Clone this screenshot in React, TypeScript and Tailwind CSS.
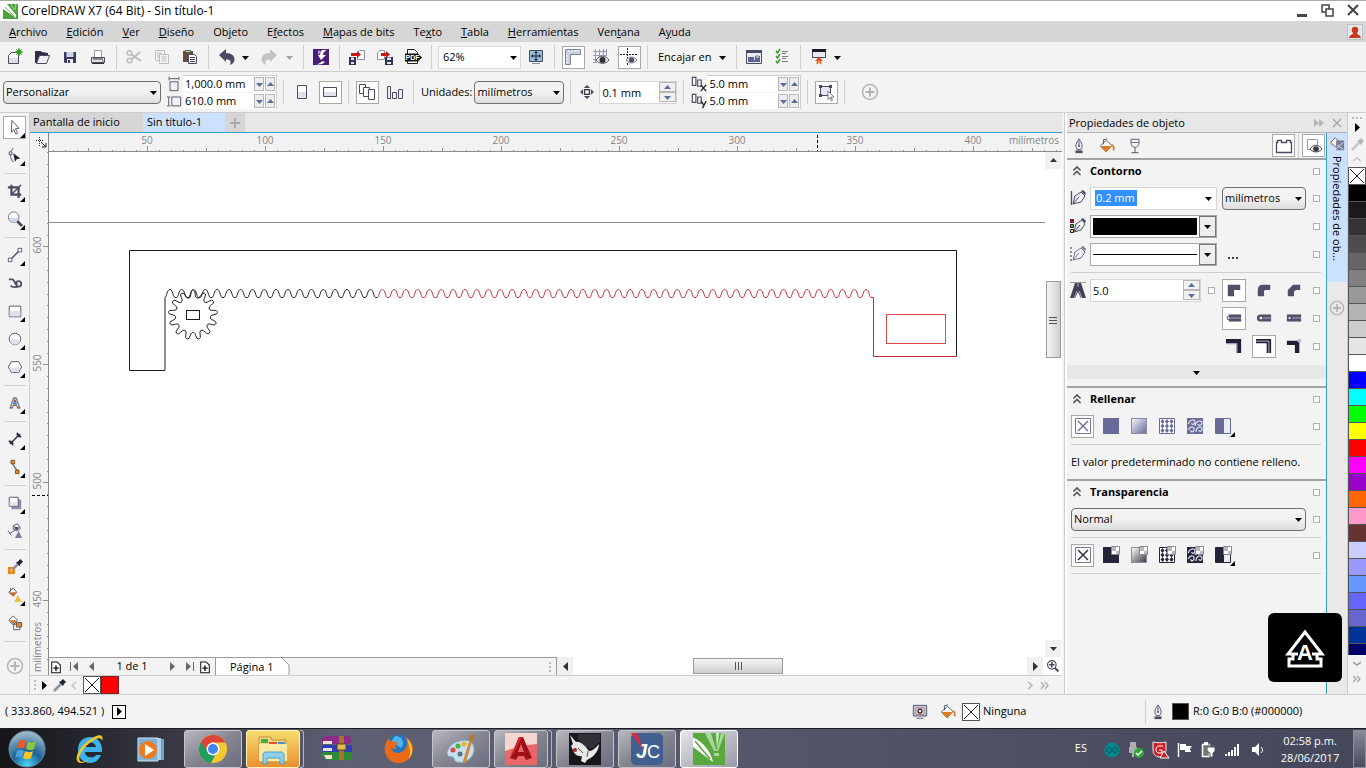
import React from 'react';

const INK = '#4a4a63';
const DIM = '#bdbdbd';

// Small drawings, all on an 18 x 18 grid
const glyphs: Record<string, React.ReactNode> = {
  newDoc: (
    <>
      <path d="M3.500 7.500l3-3h7v11h-10z" fill="#fff" stroke={INK} />
      <path d="M4 10h9v5H4z" fill="#dcdce8" />
      <circle cx="14" cy="4" r="2.600" fill="#2fa01c" />
      <path d="M14 0v8M10 4h8M11.300 1.300l5.400 5.400M16.700 1.300l-5.400 5.400" stroke="#2fa01c" />
    </>
  ),
  open: (
    <>
      <path d="M3 3h5l1 2h6v4H3z" fill="#3b3b55" />
      <path d="M2 3v12h2l2-7h9V5" fill="#2c2c45" />
      <path d="M6.500 7.500h10l-3 8h-10z" fill="#eceef6" stroke={INK} />
    </>
  ),
  save: (
    <>
      <path d="M3 4h12v11H4l-1-1z" fill="#3a3a66" />
      <path d="M5.500 4h7v5h-7z" fill="#cfd3e8" />
      <path d="M6 11h6v4H6z" fill="#e9e9f2" />
      <path d="M7 12h2v3H7z" fill="#3a3a66" />
    </>
  ),
  print: (
    <>
      <path d="M5.500 2.500h7v8h-7z" fill="#fff" stroke="#9a9aaa" />
      <path d="M2.500 9.500h13v5h-13z" fill="#e5e5e5" stroke={INK} />
      <path d="M4 11h10" stroke="#2c2c2c" />
      <path d="M13 13h2" stroke="#3aa02c" />
      <path d="M3 15.500h12" stroke="#333" />
    </>
  ),
  cut: (
    <g stroke={DIM} fill="none" strokeWidth="1.500">
      <circle cx="4.500" cy="5" r="2.300" />
      <circle cx="4.500" cy="12.500" r="2.300" />
      <path d="M6.500 6.500L16 13M6.500 11.500L15 4" strokeWidth="2" />
    </g>
  ),
  copy: (
    <g stroke={DIM} fill="#f3f3f3">
      <path d="M2.500 2.500h9v10h-9z" />
      <path d="M6.500 6.500h9v9h-9z" />
      <path d="M8.500 9h5M8.500 11h5M8.500 13h5M4 5h5M4 7h2M4 9h2" />
    </g>
  ),
  paste: (
    <>
      <path d="M2 3h10v11H2z" fill="#6b4a36" />
      <path d="M4.500 2.500h5v2h-5z" fill="#cfe3c0" stroke="#4a5a4a" />
      <path d="M7.500 6.500h6l2 2v7h-8z" fill="#f4f4fa" stroke={INK} />
      <path d="M9 9.500h5M9 11.500h5M9 13.500h5" stroke={INK} />
    </>
  ),
  undo: <path d="M1 7l7-6v4c6 0 8.500 3 8.500 6.500 0 3-2 4.800-5 5.500 2-2 2-5.500-3.500-5.700V14z" fill={INK} />,
  redo: <path d="M17 7l-7-6v4c-6 0-8.500 3-8.500 6.500 0 3 2 4.800 5 5.500-2-2-2-5.500 3.500-5.700V14z" fill="#c4c4c4" />,
  connect: (
    <>
      <path d="M1 1h16v16H1z" fill="#4b1e78" />
      <path d="M11 2h4c-3 1-4 3-4 5h3l-5 5-3-5h2c0-3 1-5 3-5z" fill="#fff" />
      <path d="M4 16c4 0 5-2 6-3l3 1c-2 2-5 3-9 2z" fill="#fff" />
      <path d="M6 2l3 2-3 3z" fill="#b99ad6" />
    </>
  ),
  importFile: (
    <>
      <path d="M9.500 4.500l2-2h5v9h-7z" fill="#fff" stroke="#8c8ca8" />
      <path d="M3 5h6V3l4 3.500L9 10V8H3z" fill="#c81818" />
      <path d="M1 9h7v8H1z" fill="#33334e" />
      <path d="M3 9.500h3v2.500H3zM3 14h3v2H3z" fill="#dfe2f0" />
    </>
  ),
  exportFile: (
    <>
      <path d="M1.500 4.500l2-2h5v9h-7z" fill="#fff" stroke="#8c8ca8" />
      <path d="M5 5h5V3l4 3.500L10 10V8H5z" fill="#c81818" />
      <path d="M9 9h8v8H9z" fill="#33334e" />
      <path d="M11 9.500h4v2.500h-4zM11 14h4v2h-4z" fill="#dfe2f0" />
    </>
  ),
  pdf: (
    <>
      <path d="M3.500 1.500h7l3 3v11h-10z" fill="#fff" stroke="#222" />
      <path d="M1 5.500h13l4 4-4 4H1z" fill="#111" />
      <text x="1.500" y="12" fontSize="7" fontWeight="700" fill="#fff" fontFamily="Liberation Sans, sans-serif">PDF</text>
    </>
  ),
  fullScreen: (
    <>
      <path d="M2.500 2.500h13v11h-13z" fill="#8fc0d8" stroke={INK} />
      <path d="M9 4v8M5 8h8" stroke="#1d1d33" />
      <path d="M9 3l2 2H7zM9 13l2-2H7zM4 8l2-2v4zM14 8l-2-2v4z" fill="#1d1d33" />
      <path d="M5 15.500h8" stroke="#8a8aa0" />
    </>
  ),
  rulers: (
    <>
      <path d="M1.500 1.500h15v5h-10v10h-5z" fill="#c9cddd" stroke="#7c819c" />
      <path d="M5 2v2M8 2v2M11 2v2M14 2v2M2 8h2M2 11h2M2 14h2" stroke="#fff" />
    </>
  ),
  grid: (
    <>
      <path d="M1 3.500h14M1 7.500h14M1 11.500h6M3.500 1v13M7.500 1v8M11.500 1v6M1 14.500h4M14.500 1v6" stroke="#9a9ab4" />
      <path d="M4 12c3-5 10-5 13 0-3 4.500-10 4.500-13 0z" fill="#e9e9ee" stroke="#555" />
      <circle cx="10.500" cy="12" r="3" fill="#2e2e38" />
    </>
  ),
  guides: (
    <>
      <path d="M7.500 0v18M0 6.500h18" stroke="#222" strokeDasharray="2 1" />
      <path d="M6 12c3-4 8-4 11 0-3 4-8 4-11 0z" fill="#dcdce0" stroke="#888" />
      <circle cx="11.500" cy="12" r="2.500" fill="#4c4c60" />
    </>
  ),
  welcome: (
    <>
      <path d="M1.500 2.500h15v13h-15z" fill="#e7e9f3" stroke={INK} />
      <path d="M1 2h16v3H1z" fill={INK} />
      <path d="M3 9h6v3h1V8h5v6H3z" fill="#5d628c" />
      <path d="M11 7h3v3h-3z" fill="#aab0d0" />
    </>
  ),
  options: (
    <>
      <path d="M9 3.500h6M9 8.500h6M9 13.500h6M9 5.500h4M9 10.500h4" stroke="#77778c" />
      <path d="M3 3l1.500 2L7 1M3 8l1.500 2L7 6M3 13l1.500 2L7 11" stroke="#3e9a2d" fill="none" strokeWidth="1.500" />
    </>
  ),
  launcher: (
    <>
      <path d="M2.500 1.500h13v8h-13z" fill="#e8e8f0" stroke={INK} />
      <path d="M2 1h14v3H2z" fill="#1b1b2b" />
      <path d="M9 9l4 4-2-.5.500 4-2.500-2-2.500 2 .5-4L5 13z" fill="#e33a1c" />
      <path d="M9 12l1.500 2L9 16l-1.500-2z" fill="#f7b733" />
    </>
  ),
  pageW: (
    <>
      <path d="M4.500 6.500h9v10h-9z" fill="#f1f1f6" stroke={INK} />
      <path d="M3.500 1v4M14.500 1v4M4 3h10" stroke={INK} />
    </>
  ),
  pageH: (
    <>
      <path d="M6.500 4.500h10v10h-10z" fill="#f1f1f6" stroke={INK} />
      <path d="M1 4.500h4M1 14.500h4M3 5v9" stroke={INK} />
    </>
  ),
  portrait: <><path d="M4.500 2.500h9v13h-9z" fill="#fff" stroke={INK} /><path d="M5 9h8v6H5z" fill="#dfe0ea" /></>,
  landscape: <><path d="M2.500 4.500h13v9h-13z" fill="#fff" stroke={INK} /><path d="M3 9h12v4H3z" fill="#dfe0ea" /></>,
  allPages: (
    <g fill="#fff" stroke={INK}>
      <path d="M1.500 1.500h6v9h-6z" /><path d="M5.500 4.500h6v9h-6z" /><path d="M10.500 6.500h6v10h-6z" />
    </g>
  ),
  curPage: (
    <g fill="#eef" stroke={INK}>
      <path d="M1.500 3.500h3v12h-3zM6.500 9.500h4v6h-4zM12.500 6.500h4v9h-4z" />
    </g>
  ),
  nudge: (
    <>
      <path d="M6 6h6v6H6z" fill="#fff" stroke="#2c2c3c" strokeWidth="1.500" />
      <path d="M9 0l4 4H5zM9 18l4-4H5zM0 9l4-4v8zM18 9l-4-4v8z" fill={INK} />
    </>
  ),
  dupX: (
    <>
      <g fill="#fff" stroke={INK} strokeWidth="1.300"><path d="M1.500 1.500h4v9h-4z" /><path d="M7.500 4.500h4v7h-4z" /></g>
      <path d="M11 10l6 7M17 10l-6 7" stroke="#222" strokeWidth="1.500" />
    </>
  ),
  dupY: (
    <>
      <g fill="#fff" stroke={INK} strokeWidth="1.300"><path d="M1.500 1.500h4v9h-4z" /><path d="M7.500 4.500h4v7h-4z" /></g>
      <path d="M11 9l3 4M17 9l-4 8" stroke="#222" strokeWidth="1.500" />
    </>
  ),
  treatAll: (
    <>
      <path d="M3.500 3.500h10v9h-10z" fill="#e6e7f0" stroke={INK} />
      <path d="M2 2h3v3H2zM12 2h3v3h-3zM2 11h3v3H2z" fill={INK} />
      <path d="M11 8l6 6h-3l1.500 3-1.500.5-1-3-2 2z" fill="#fff" stroke="#7d7d95" />
    </>
  ),
  plusRing: <g stroke="#b4b4b4" fill="none"><circle cx="9" cy="9" r="7.500" strokeWidth="1.500" /><path d="M9 4.500v9M4.500 9h9" strokeWidth="2" /></g>,
  pick: <path d="M5.500 1.500l8 9-4 .5 2.500 5-2 1-2.500-5-2.500 3z" fill="#fff" stroke={INK} />,
  shape: (
    <>
      <path d="M7 1C3 6 3 12 7 17" fill="none" stroke="#8c8ca0" strokeWidth="1.500" />
      <path d="M2.500 5.500h3v3h-3z" fill="#fff" stroke={INK} />
      <path d="M7 7l8 6-4 .5-2 3z" fill="#1e1e2d" />
    </>
  ),
  crop: (
    <g fill="none" stroke={INK} strokeWidth="2.500">
      <path d="M5 2v11h11M1 5h12v12" /><path d="M5 13L16 2" strokeWidth="1.500" />
    </g>
  ),
  zoomTool: (
    <>
      <path d="M11 11l6 6" stroke="#4b4b58" strokeWidth="3" />
      <circle cx="7.500" cy="7" r="6" fill="#fff" stroke="#6a6a86" />
      <path d="M2.500 8h10a5 5 0 0 1-10 0z" fill="#cfd6e8" />
    </>
  ),
  freehand: (
    <>
      <path d="M4 14L14 4" stroke={INK} strokeWidth="1.500" />
      <path d="M1.500 12.500h4v4h-4zM12.500 1.500h4v4h-4z" fill="#fff" stroke={INK} />
    </>
  ),
  artistic: <path d="M2 5h4c3 0 3 8 7 8 4 0 4-6 0-6-3 0-4 3-1 3M12 13c-3 1-6 1-8-1" fill="none" stroke="#4f4f64" strokeWidth="2" />,
  rect: <><path d="M2.500 3.500h13v12h-13z" fill="#fff" stroke={INK} /><path d="M3 9h12v6H3z" fill="#dfe0ea" /></>,
  ellipse: <><circle cx="9" cy="9" r="6.500" fill="#fff" stroke={INK} /><path d="M3 9.500h12a6 6 0 0 1-12 0z" fill="#dfe0ea" /></>,
  polygon: <><path d="M5 3h8l3.500 6-3.500 6H5L1.500 9z" fill="#fff" stroke={INK} /><path d="M2.500 9.500h13l-3 5h-7z" fill="#dfe0ea" /></>,
  textTool: <text x="3" y="15" fontSize="16" fontWeight="700" fill="#fff" stroke={INK} strokeWidth="1" fontFamily="Liberation Sans, sans-serif">A</text>,
  dimension: (
    <>
      <path d="M4 14L14 4" stroke="#2c2c3c" strokeWidth="1.500" />
      <path d="M2 11l5 5M11 2l5 5" stroke="#2c2c3c" strokeWidth="1.500" />
      <path d="M3 15l1-5 4 4zM15 3l-5 1 4 4z" fill="#2c2c3c" />
    </>
  ),
  connector: (
    <>
      <path d="M6 5l6 9" stroke={INK} strokeWidth="1.200" />
      <path d="M4.500 1.500h4v4h-4zM9.500 12.500h4v4h-4z" fill="#e8871e" stroke="#7a4a1a" />
    </>
  ),
  shadow: <><path d="M5 5h11v11H5z" fill="#8d90ad" /><path d="M2.500 2.500h10v10h-10z" fill="#fff" stroke={INK} /><path d="M3 8h9v4H3z" fill="#e5e5ee" /></>,
  transp: (
    <>
      <path d="M7 3l5-2 3 5-3 3-5-2z" fill="#f0f2fa" stroke={INK} />
      <path d="M8 4l6 1-2 3-3-1z" fill={INK} />
      <path d="M9 8l-6 4M1 9l4 5" stroke={INK} />
      <path d="M13 9l4 8H9z" fill="#777c96" />
    </>
  ),
  dropperTool: (
    <>
      <path d="M1 9h8v8H1z" fill="#e8871e" /><path d="M4 11h2v3H4z" fill="#fbd36a" />
      <path d="M6 12l6-6" stroke="#8f8fa5" strokeWidth="3" />
      <path d="M10 4l2-1 3-3 3 3-3 3-1 2z" fill="#25253a" />
    </>
  ),
  fillTool: (
    <>
      <path d="M7 1l4 5-4 4-5-4z" fill="#fff" stroke={INK} /><path d="M3 6h8l-4 5z" fill="#c96d25" />
      <path d="M4 5V1" stroke={INK} />
      <path d="M12 9l5 8H8z" fill="#eebf4b" />
    </>
  ),
  smartFill: (
    <>
      <path d="M7 1l5 5-5 5-5-5z" fill="#fff" stroke={INK} /><path d="M3 6h8l-4 4z" fill="#c96d25" />
      <path d="M7.500 10.500h7v6h-7z" fill="#fff" stroke={INK} /><path d="M10.500 8.500h6v5h-6z" fill="#e8871e" stroke={INK} />
    </>
  ),
  nib: (
    <>
      <path d="M9 1c2 3 4 6 3.500 9L11 13H7l-1.500-3C5 7 7 4 9 1z" fill="#eef0f8" stroke={INK} />
      <path d="M9 3v6" stroke={INK} /><circle cx="9" cy="9" r="1" fill={INK} /><path d="M5 14h8v3H5z" fill={INK} />
    </>
  ),
  bucket: (
    <>
      <path d="M8.500 2.500l6 6-6.500 7L1.500 9z" fill="#fff" stroke={INK} />
      <path d="M2 9h12l-6 7z" fill="#e07b1c" />
      <path d="M5 7V2l4-1" fill="none" stroke={INK} /><path d="M14 8c3 0 2.500 3 2.500 6" fill="none" stroke="#e07b1c" strokeWidth="2" />
    </>
  ),
  glass: <path d="M4.500 1.500h9v4c0 3-2 5-4.500 5s-4.500-2-4.500-5zM9 10.500v6M5 16.500h8M5 5h8" fill="#fff" stroke={INK} />,
  tabsMode: <path d="M1.500 15.500v-10h1v-2h4v2h5v-2h4v2h1v10z" fill="#fff" stroke={INK} strokeWidth="1.300" />,
  preview: (
    <>
      <path d="M2.500 2.500h10v10h-10z" fill="#fff" stroke="#9a9ab0" />
      <path d="M5 12c3-5 9-5 12 0-3 4-9 4-12 0z" fill="#e9e9ee" stroke="#555" /><circle cx="11" cy="12" r="2.800" fill="#3a3a48" />
    </>
  ),
  chevUp: <path d="M5 8.500l4-4 4 4M5 13.500l4-4 4 4" fill="none" stroke="#555" strokeWidth="1.800" />,
  penWidth: (
    <>
      <path d="M2.500 2v14" stroke={INK} strokeWidth="1.300" />
      <path d="M4 15l2-8 6-4 4 4-4 6zM4 15l6-7" fill="#eef0f6" stroke={INK} /><path d="M12 2l4 4 1-2-3-3z" fill={INK} />
    </>
  ),
  penColor: (
    <>
      <path d="M5 15l2-8 6-4 3 4-4 6zM5 15l6-7" fill="#eef0f6" stroke={INK} /><path d="M12 2l4 4 1-2-3-3z" fill={INK} />
      <path d="M1 2h4v4H1z" fill="#8e1d2c" /><path d="M1.500 7.500h3v3h-3z" fill="#3bbd4b" stroke="#222" /><path d="M1.500 12.500h3v3h-3z" fill="#f2e33a" stroke="#222" />
    </>
  ),
  penStyle: (
    <>
      <path d="M2 2v14" stroke="#8c8ca0" strokeWidth="2" strokeDasharray="2 2" />
      <path d="M4 15l2-8 6-4 4 4-4 6zM4 15l6-7" fill="#eef0f6" stroke="#77778c" /><path d="M12 2l4 4 1-2-3-3z" fill="#77778c" />
    </>
  ),
  miter: <><path d="M1 1.500h16" stroke="#999" /><path d="M6 2h6l5 15h-5l-3-6-3 6H1z" fill="#3f3f55" /><path d="M9 2v4M5 17l3-7M13 17l-3-7" stroke="#a5a5b5" /></>,
  corner1: <path d="M2 3h14v6H9v7H2z" fill="#4f4f68" />,
  corner2: <path d="M2 16V9c0-4 2-6 6-6h8v6h-5c-1.500 0-2 .5-2 2v5z" fill="#4f4f68" />,
  corner3: <path d="M2 16V9l6-6h8v6h-5l-2 2v5z" fill="#4f4f68" />,
  cap1: <><path d="M3 5h14v8H3z" fill="#4f4f68" /><path d="M1.500 7.500h3v3h-3z" fill="#fff" stroke={INK} /><path d="M5 9h12" stroke="#b9b9c8" /></>,
  cap2: <><path d="M5 5h12v8H5a4 4 0 0 1 0-8z" fill="#4f4f68" /><circle cx="5.500" cy="9" r="1.500" fill="#fff" /><path d="M8 9h9" stroke="#b9b9c8" /></>,
  cap3: <><path d="M1 5h16v8H1z" fill="#4f4f68" /><path d="M3 8h2v2H3z" fill="#fff" /><path d="M7 9h10" stroke="#b9b9c8" /></>,
  pos1: <><path d="M0 1h17v16h-5V6H0z" fill="#1f1f36" /><path d="M0 6.500h12.500V17" stroke="#9090a5" fill="none" /></>,
  pos2: <><path d="M0 1h17v16h-5V6H0z" fill="#1f1f36" /><path d="M0 3.500h14.500V17" stroke="#c9c9d6" fill="none" /></>,
  pos3: <><path d="M1 3h14v14h-5V8H1z" fill="#1f1f36" /><circle cx="15" cy="3" r="2.200" fill="#b9b9cc" /></>,
  noFill: <><path d="M1.500 1.500h15v15h-15z" fill="#fff" stroke="#77779a" /><path d="M4 4l10 10M14 4L4 14" stroke="currentColor" strokeWidth="1.400" /></>,
  solid: <path d="M1 1h16v16H1z" fill="currentColor" />,
  pattern: (
    <>
      <path d="M1.500 1.500h15v15h-15z" fill="#fff" stroke="currentColor" />
      <path d="M4.500 2l2 2.500-2 2.500-2-2.500zM9 2l2 2.500L9 7 7 4.500zM13.500 2l2 2.500-2 2.500-2-2.500zM4.500 6.500l2 2.500-2 2.500-2-2.500zM9 6.500L11 9l-2 2.500L7 9zM13.500 6.500l2 2.500-2 2.500-2-2.500zM4.500 11l2 2.500-2 2.500-2-2.500zM9 11l2 2.500L9 16l-2-2.500zM13.500 11l2 2.500-2 2.500-2-2.500z" fill="currentColor" />
    </>
  ),
  texture: (
    <>
      <path d="M1 1h16v16H1z" fill="currentColor" />
      <path d="M2 7c2-5 7-5 7-2s-4 3-3 1M9 9c1-6 7-6 7-3s-4 3-4 1M2 13c3-5 7-3 6 0s-4 2-3 0M10 15c0-6 6-6 6-3s-3 3-3 1" fill="none" stroke="#e1e3f2" strokeWidth="1.200" />
    </>
  ),
  twoTone: <><path d="M1.500 1.500h15v15h-15z" fill="#e9ebf5" stroke="currentColor" /><path d="M2 2h8v14H2z" fill="currentColor" /></>,
  magnify: <><path d="M11 11l5 5" stroke={INK} strokeWidth="2.500" /><circle cx="7.500" cy="7.500" r="5.500" fill="#fff" stroke={INK} strokeWidth="1.500" /><path d="M7.500 4v7M4 7.500h7" stroke={INK} strokeWidth="2" /></>,
  addPage: <><path d="M3.500 2.500h7l4 4v10h-11z" fill="#fff" stroke="#111" strokeWidth="1.300" /><path d="M9 7v7M5.500 10.500h7" stroke="#111" strokeWidth="1.800" /></>,
  proof: <><path d="M1.500 1.500h15v12h-15z" fill="#b8c9dc" stroke={INK} /><path d="M4.500 4.500h9v7h-9z" fill="#fff" stroke="#b55" /><circle cx="9" cy="8" r="2.200" fill="none" stroke="#222" strokeWidth="1.500" /><path d="M5 16h8" stroke={INK} /></>,
  docTab: <><path d="M7 2l5 5-5 5-5-5z" fill="#fff" stroke={INK} /><path d="M1 8h4l-2 3z" fill="#e8b04a" /><path d="M8 5h9v11H8z" fill="#777a99" /><path d="M9 10l7 5M16 7l-8 8" stroke="#e5e6f2" /></>,
};

type GlyphName = string;

function Glyph({ name, size = 'h-[18px] w-[18px]' }: { name: GlyphName; size?: string }) {
  return (
    <svg viewBox="0 0 18 18" className={`${size} shrink-0`} aria-hidden="true">
      {glyphs[name]}
    </svg>
  );
}

function Tri({ dir = 'down', fill = '#000' }: { dir?: 'down' | 'up' | 'left' | 'right'; fill?: string }) {
  const d = {
    down: 'M1 3h7L4.500 7z',
    up: 'M1 6h7L4.500 2z',
    left: 'M7 0v9L2 4.500z',
    right: 'M2 0v9l5-4.500z',
  }[dir];
  return (
    <svg viewBox="0 0 9 9" className="h-[9px] w-[9px] shrink-0" aria-hidden="true">
      <path d={d} fill={fill} />
    </svg>
  );
}

function Sep({ className = 'mx-1' }: { className?: string }) {
  return <span className={`h-6 w-px shrink-0 bg-[#cfcfcf] ${className}`} />;
}

function ToolButton({ name, label, active = false }: { name: GlyphName; label: string; active?: boolean }) {
  return (
    <button aria-label={label} className="flex h-7 w-7 shrink-0 items-center justify-center">
      <span className={`flex h-[23px] w-[23px] items-center justify-center ${active ? 'border border-[#a8a8a8] bg-white' : ''}`}>
        <Glyph name={name} />
      </span>
    </button>
  );
}

function Picker({ label, value, className, flat = false }: { label: string; value: string; className: string; flat?: boolean }) {
  return (
    <span className={`relative flex h-[23px] shrink-0 ${className}`}>
      <select
        aria-label={label}
        className={`h-full w-full appearance-none outline-none ${
          flat ? 'border border-[#d9d9d9] bg-white pl-1' : 'rounded-sm border border-[#6f6f6f] bg-linear-to-b from-[#f2f2f2] from-50% to-[#dcdcdc] pl-[2px]'
        }`}
      >
        <option>{value}</option>
      </select>
      <span className="pointer-events-none absolute top-[7px] right-[3px]">
        <Tri />
      </span>
    </span>
  );
}

function PairField({ label, value }: { label: string; value: string }) {
  return (
    <div className="flex h-4 w-full items-center bg-white">
      <input aria-label={label} defaultValue={value} className="h-4 w-full min-w-0 pl-[2px] outline-none" />
      <button aria-label={`${label} menos`} className="mr-px flex h-[14px] w-[10px] shrink-0 items-center justify-center border border-[#b8b8b8] bg-[#ececec]">
        <Tri fill="#5b6f9c" />
      </button>
      <button aria-label={`${label} más`} className="mr-px flex h-[14px] w-[10px] shrink-0 items-center justify-center border border-[#b8b8b8] bg-[#ececec]">
        <Tri dir="up" fill="#5b6f9c" />
      </button>
    </div>
  );
}

function SpinField({ label, value, className }: { label: string; value: string; className: string }) {
  return (
    <div className={`flex h-[23px] shrink-0 items-center border border-[#d6d6d6] bg-white ${className}`}>
      <input aria-label={label} defaultValue={value} className="h-full w-full min-w-0 pl-[2px] outline-none" />
      <div className="flex w-[17px] shrink-0 flex-col">
        <button aria-label={`${label} más`} className="flex h-[10px] items-center justify-center border border-[#b8b8b8] bg-[#f0f0f0]">
          <Tri dir="up" fill="#5b6f9c" />
        </button>
        <button aria-label={`${label} menos`} className="flex h-[10px] items-center justify-center border border-[#b8b8b8] bg-[#f0f0f0]">
          <Tri fill="#5b6f9c" />
        </button>
      </div>
    </div>
  );
}

const menus: [string, number][] = [
  ['Archivo', 0], ['Edición', 0], ['Ver', 0], ['Diseño', 0], ['Objeto', 2], ['Efectos', 1],
  ['Mapas de bits', 0], ['Texto', 2], ['Tabla', 0], ['Herramientas', 0], ['Ventana', 3], ['Ayuda', 1],
];

function TitleBar() {
  return (
    <header className="flex h-[21px] shrink-0 items-center border-t border-[#a9a9a9] bg-white pl-[3px]">
      <svg viewBox="0 0 15 15" className="mr-[3px] h-[15px] w-[15px]" aria-hidden="true">
        <path d="M0 0h15v15H0z" fill="#4fa33c" />
        <path d="M0 0h4l9 11v3L9 11 0 5z" fill="#fff" />
        <path d="M2 3l9 9" stroke="#4fa33c" strokeWidth=".7" />
        <path d="M8 0l3 6M13 0l-1 6" stroke="#a8d39a" />
      </svg>
      <h1 className="text-xs">CorelDRAW X7 (64 Bit) - Sin título-1</h1>
      <div className="ml-auto flex items-center gap-[11px] pr-[6px]">
        <button aria-label="Minimizar">
          <svg viewBox="0 0 14 14" className="h-[14px] w-[14px]"><path d="M1 10h10v3H1z" fill="#444" /></svg>
        </button>
        <button aria-label="Restaurar">
          <svg viewBox="0 0 14 14" className="h-[14px] w-[14px]" fill="#fff" stroke="#444" strokeWidth="1.500"><path d="M1 1h7v7H1z" /><path d="M5 5h7v7H5z" /></svg>
        </button>
        <button aria-label="Cerrar">
          <svg viewBox="0 0 14 14" className="h-[14px] w-[14px]"><path d="M2 1l10 10M12 1L2 11" stroke="#444" strokeWidth="2" /></svg>
        </button>
      </div>
    </header>
  );
}

function MenuBar() {
  return (
    <nav className="flex h-[21px] shrink-0 items-center bg-[#d6d6d6] pl-[9px]">
      <div className="flex gap-[19px] pt-px">
        {menus.map(([text, at]) => (
          <button key={text}>
            {text.slice(0, at)}
            <u>{text[at]}</u>
            {text.slice(at + 1)}
          </button>
        ))}
      </div>
      <button aria-label="Cuenta" className="mr-[3px] ml-auto border border-[#c0c0c0] bg-white">
        <svg viewBox="0 0 14 14" className="h-[14px] w-[14px]">
          <path d="M0 0h14v14H0z" fill="#e3e8ee" /><circle cx="7" cy="5" r="3.300" fill="#c8391f" /><path d="M1 13c1-4 4-3 4-5h4c0 2 3 1 4 5z" fill="#c8391f" />
        </svg>
      </button>
    </nav>
  );
}

function StandardBar() {
  return (
    <div className="flex h-[30px] shrink-0 items-center border-b border-[#cdcdcd] pt-px">
      <ToolButton name="newDoc" label="Nuevo" />
      <ToolButton name="open" label="Abrir" />
      <ToolButton name="save" label="Guardar" />
      <ToolButton name="print" label="Imprimir" />
      <Sep className="mr-[3px] ml-1" />
      <ToolButton name="cut" label="Cortar" />
      <ToolButton name="copy" label="Copiar" />
      <ToolButton name="paste" label="Pegar" />
      <Sep />
      <ToolButton name="undo" label="Deshacer" />
      <Tri />
      <span className="w-[5px]" />
      <ToolButton name="redo" label="Rehacer" />
      <span className="w-[2px]" />
      <Tri fill="#a0a0a0" />
      <Sep className="mr-[3px] ml-[9px]" />
      <ToolButton name="connect" label="Conectar" />
      <Sep className="mr-[3px] ml-1" />
      <ToolButton name="importFile" label="Importar" />
      <ToolButton name="exportFile" label="Exportar" />
      <ToolButton name="pdf" label="Publicar como PDF" />
      <Sep className="mr-[6px] ml-1" />
      <Picker label="Nivel de zoom" value="62%" className="w-[83px]" flat />
      <span className="w-px" />
      <ToolButton name="fullScreen" label="Pantalla completa" />
      <Sep />
      <ToolButton name="rulers" label="Mostrar reglas" active />
      <ToolButton name="grid" label="Mostrar cuadrícula" />
      <ToolButton name="guides" label="Mostrar guías" active />
      <Sep />
      <button className="ml-[6px] flex items-center gap-[7px]">
        Encajar en <Tri />
      </button>
      <Sep className="mr-[3px] ml-[9px]" />
      <ToolButton name="welcome" label="Pantalla de bienvenida" />
      <ToolButton name="options" label="Opciones" />
      <Sep />
      <ToolButton name="launcher" label="Iniciador" />
      <Tri />
    </div>
  );
}

function PropertyBar() {
  return (
    <div className="flex h-[41px] shrink-0 items-center border-b border-[#cdcdcd] pl-[3px]">
      <Picker label="Tamaño de página" value="Personalizar" className="w-[158px]" />
      <div className="ml-[5px] flex flex-col gap-px">
        <Glyph name="pageW" size="h-4 w-4" />
        <Glyph name="pageH" size="h-4 w-4" />
      </div>
      <div className="ml-px flex w-[94px] flex-col gap-px border-t border-r border-[#cfcfcf]">
        <PairField label="Ancho" value="1,000.0 mm" />
        <PairField label="Alto" value="610.0 mm" />
      </div>
      <Sep className="mr-1 ml-[6px]" />
      <ToolButton name="portrait" label="Vertical" />
      <ToolButton name="landscape" label="Horizontal" active />
      <Sep />
      <ToolButton name="allPages" label="Todas las páginas" active />
      <ToolButton name="curPage" label="Página actual" />
      <Sep />
      <label className="mr-[2px] ml-[3px]">Unidades:</label>
      <Picker label="Unidades" value="milímetros" className="w-[90px]" />
      <Sep className="mr-1 ml-[6px]" />
      <span className="flex w-6 justify-center"><Glyph name="nudge" size="h-[14px] w-[14px]" /></span>
      <SpinField label="Distancia de precisión" value="0.1 mm" className="w-[78px]" />
      <Sep className="mr-[7px] ml-[6px]" />
      <div className="flex flex-col gap-px">
        <Glyph name="dupX" size="h-4 w-4" />
        <Glyph name="dupY" size="h-4 w-4" />
      </div>
      <div className="flex w-[94px] flex-col gap-px border-t border-r border-[#cfcfcf]">
        <PairField label="Duplicar X" value="5.0 mm" />
        <PairField label="Duplicar Y" value="5.0 mm" />
      </div>
      <Sep className="mr-1 ml-[6px]" />
      <ToolButton name="treatAll" label="Tratar como relleno" active />
      <Sep className="mr-4 ml-1" />
      <button aria-label="Personalizar barra"><Glyph name="plusRing" /></button>
    </div>
  );
}

const tools: { name: GlyphName; label: string; active?: boolean; fly?: boolean; sep?: boolean }[] = [
  { name: 'pick', label: 'Selección', active: true, fly: true },
  { name: 'shape', label: 'Forma', fly: true, sep: true },
  { name: 'crop', label: 'Recortar', fly: true },
  { name: 'zoomTool', label: 'Zoom', fly: true, sep: true },
  { name: 'freehand', label: 'Mano alzada', fly: true },
  { name: 'artistic', label: 'Medios artísticos' },
  { name: 'rect', label: 'Rectángulo', fly: true },
  { name: 'ellipse', label: 'Elipse', fly: true },
  { name: 'polygon', label: 'Polígono', fly: true, sep: true },
  { name: 'textTool', label: 'Texto', fly: true, sep: true },
  { name: 'dimension', label: 'Cota', fly: true },
  { name: 'connector', label: 'Conector', fly: true, sep: true },
  { name: 'shadow', label: 'Sombra', fly: true },
  { name: 'transp', label: 'Transparencia', sep: true },
  { name: 'dropperTool', label: 'Cuentagotas', fly: true },
  { name: 'fillTool', label: 'Relleno', fly: true },
  { name: 'smartFill', label: 'Relleno inteligente', sep: true },
];

function Toolbox() {
  return (
    <aside className="flex w-[30px] shrink-0 flex-col items-center border-r border-[#cdcdcd]">
      {tools.map((t) => (
        <React.Fragment key={t.name}>
          <button aria-label={t.label} className="relative flex h-7 w-full shrink-0 items-center justify-center">
            <span className={`flex h-[23px] w-[23px] items-center justify-center ${t.active ? 'border border-[#a8a8a8] bg-white' : ''}`}>
              <Glyph name={t.name} size="h-4 w-4" />
            </span>
            {t.fly && (
              <svg viewBox="0 0 5 5" className="absolute right-1 bottom-[3px] h-[5px] w-[5px]"><path d="M5 0v5H0z" /></svg>
            )}
          </button>
          {t.sep && <span className="mt-1 mb-[3px] h-px w-[22px] shrink-0 bg-[#cfcfcf]" />}
        </React.Fragment>
      ))}
      <button aria-label="Personalizar herramientas" className="mt-3"><Glyph name="plusRing" /></button>
    </aside>
  );
}

// 10 screen units of 11.8px for every 50 mm
const STEP = 11.8;

function TopRuler() {
  const ticks = Array.from({ length: 86 }, (_, i) => i);
  return (
    <div className="flex h-[19px] shrink-0">
      <span className="flex w-[18px] items-center justify-end">
        <svg viewBox="0 0 12 12" className="h-3 w-3"><path d="M0 3.500h8M3.500 0v10" stroke="#222" strokeDasharray="1 1" /><path d="M5 5l5 5M10 6v4H6" stroke="#222" fill="none" /></svg>
      </span>
      <svg className="h-full min-w-0 flex-1 border-b border-l border-[#8a8a8a] text-[10px]">
        {ticks.map((i) => {
          const x = Math.round(4 + i * STEP);
          const big = i % 10 === 8;
          const mid = i % 5 === 3;
          return <path key={i} d={`M${x + 0.5} 18v${big ? -5 : mid ? -3 : -1}`} stroke="#8f8f8f" />;
        })}
        {[50, 100, 150, 200, 250, 300, 350, 400].map((n, i) => (
          <text key={n} x={98 + i * 118} y="11" textAnchor="middle" fill="#858585">{n}</text>
        ))}
        <text x="960" y="11" fill="#858585">milímetros</text>
        <path d="M768.500 2v16" stroke="#000" strokeDasharray="3 2" />
      </svg>
    </div>
  );
}

function SideRuler() {
  const ticks = Array.from({ length: 44 }, (_, i) => i);
  return (
    <svg className="h-full w-[19px] shrink-0 border-r border-[#8a8a8a] text-[10px]">
      {ticks.map((i) => {
        const y = Math.round(i * STEP);
        const big = i % 10 === 8;
        return <path key={i} d={`M18 ${y + 0.5}h${big ? -5 : -1}`} stroke="#8f8f8f" />;
      })}
      {[600, 550, 500, 450].map((n, i) => (
        <text key={n} textAnchor="middle" fill="#858585" transform={`translate(11 ${93 + i * 118}) rotate(-90)`}>{n}</text>
      ))}
      <text fill="#858585" transform="translate(11 520) rotate(-90)">milímetros</text>
      <path d="M2 343.500h16" stroke="#000" strokeDasharray="3 2" />
    </svg>
  );
}

// One rack tooth: rounded crest, short flat root
function rack(x0: number, teeth: number) {
  let d = '';
  for (let i = 0; i < teeth; i++) {
    const x = x0 + i * STEP;
    d += `L${x.toFixed(1)} 145.500c1.800-1 2-8 4.900-8s3.100 7 4.900 8h2`;
  }
  return d;
}

function gearPath(cx: number, cy: number, teeth: number, root: number, tip: number) {
  const pts: string[] = [];
  const step = (Math.PI * 2) / teeth;
  const at = (r: number, a: number) => `${(cx + r * Math.cos(a)).toFixed(1)} ${(cy + r * Math.sin(a)).toFixed(1)}`;
  for (let i = 0; i < teeth; i++) {
    const a = -Math.PI / 2 + i * step;
    pts.push(
      `${i ? 'L' : 'M'}${at(root, a - step * 0.4)}`,
      `Q${at(root + 1, a - step * 0.24)} ${at((root + tip) / 2, a - step * 0.22)}`,
      `Q${at(tip, a - step * 0.18)} ${at(tip, a - step * 0.04)}`,
      `L${at(tip, a + step * 0.04)}`,
      `Q${at(tip, a + step * 0.18)} ${at((root + tip) / 2, a + step * 0.22)}`,
      `Q${at(root + 1, a + step * 0.24)} ${at(root, a + step * 0.4)}`,
    );
  }
  return `${pts.join('')}Z`;
}

function Drawing() {
  return (
    <svg className="h-full min-w-0 flex-1 bg-white" fill="none">
      <path d="M0 70.500h5000" stroke="#8f8f8f" />
      <path d={`M907.500 204.500V98.500H80.500V218.500H116V145.500${rack(116, 18)}`} stroke="#1c1c1c" />
      <path d={`M328.400 145.500${rack(328.400, 42)}H824.500V204.500H907.500`} stroke="#c8282c" />
      <rect x="837.500" y="162.500" width="59" height="29" stroke="#e0484c" />
      <path d={gearPath(144, 163, 13, 17.500, 24.500)} stroke="#1c1c1c" />
      <rect x="137.500" y="158.500" width="13" height="9" stroke="#1c1c1c" />
    </svg>
  );
}

function Workspace() {
  return (
    <main className="flex min-w-0 flex-1 flex-col">
      <div className="flex h-5 shrink-0 border-b border-[#2f9fce] bg-[#e7e7e7]">
        <button className="w-[113px] bg-[#d6d6d6] pl-[3px] text-left">Pantalla de inicio</button>
        <button className="w-[82px] bg-[#cce0ff] pl-1 text-left">Sin título-1</button>
        <button aria-label="Documento nuevo" className="flex w-5 items-center justify-center bg-[#d6d6d6]">
          <svg viewBox="0 0 12 12" className="h-3 w-3"><path d="M6 1v10M1 6h10" stroke="#aaa" strokeWidth="2" /></svg>
        </button>
      </div>
      <TopRuler />
      <div className="flex min-h-0 flex-1">
        <SideRuler />
        <div className="flex min-w-0 flex-1 flex-col">
          <div className="flex min-h-0 flex-1 bg-white">
            <Drawing />
            <div className="mr-px flex w-4 shrink-0 flex-col items-center justify-between bg-white">
              <button aria-label="Subir" className="flex h-[17px] w-full items-center justify-center bg-[#f0f0f0]"><Tri dir="up" fill="#333" /></button>
              <div className="mb-[170px] flex h-[77px] w-[15px] items-center justify-center border border-[#999] bg-linear-to-r from-[#f5f5f5] to-[#cfcfcf]">
                <svg viewBox="0 0 8 8" className="h-2 w-2"><path d="M0 1.500h8M0 4.500h8M0 7.500h8" stroke="#555" /></svg>
              </div>
              <button aria-label="Bajar" className="flex h-[17px] w-full items-center justify-center bg-[#f0f0f0]"><Tri fill="#333" /></button>
            </div>
          </div>
          <div className="flex h-[18px] shrink-0">
            <div className="flex w-[508px] shrink-0 items-center border-t border-r border-[#9a9a9a]">
              <button aria-label="Agregar página"><Glyph name="addPage" size="h-[14px] w-[14px]" /></button>
              <button aria-label="Primera página" className="ml-[7px] flex items-center"><span className="h-[9px] w-px bg-[#666]" /><Tri dir="left" fill="#666" /></button>
              <button aria-label="Página anterior" className="ml-[7px]"><Tri dir="left" fill="#666" /></button>
              <span className="w-[72px] text-center">1 de 1</span>
              <button aria-label="Página siguiente"><Tri dir="right" fill="#666" /></button>
              <button aria-label="Última página" className="ml-[7px] flex items-center"><Tri dir="right" fill="#666" /><span className="h-[9px] w-px bg-[#666]" /></button>
              <button aria-label="Agregar página al final" className="ml-1"><Glyph name="addPage" size="h-[14px] w-[14px]" /></button>
              <div className="ml-[3px] flex h-full">
                <button className="h-full border-l border-[#9a9a9a] bg-white pl-[14px] leading-4">Página 1</button>
                <svg viewBox="0 0 17 17" className="h-[17px] w-[17px]"><path d="M0 0h9l7 7v10H0z" fill="#fff" /><path d="M9 0l7 7v10" stroke="#9a9a9a" fill="none" /></svg>
              </div>
              <svg viewBox="0 0 3 12" className="mr-1 ml-auto h-3 w-[3px]"><path d="M0 1h2v2H0zM0 5h2v2H0zM0 9h2v2H0z" fill="#bbb" /></svg>
            </div>
            <div className="flex min-w-0 flex-1 items-center bg-white">
              <button aria-label="Izquierda" className="flex h-full w-4 items-center justify-center bg-[#f0f0f0]"><Tri dir="left" fill="#333" /></button>
              <div className="mr-[244px] ml-auto flex h-4 w-[90px] items-center justify-center border border-[#999] bg-linear-to-b from-[#f5f5f5] to-[#cfcfcf]">
                <svg viewBox="0 0 8 8" className="h-2 w-2"><path d="M1.500 0v8M4.500 0v8M7.500 0v8" stroke="#555" /></svg>
              </div>
              <button aria-label="Derecha" className="flex h-full w-4 items-center justify-center bg-[#f0f0f0]"><Tri dir="right" fill="#333" /></button>
              <button aria-label="Navegador" className="mr-px ml-[2px] flex w-4 justify-center"><Glyph name="magnify" size="h-[14px] w-[14px]" /></button>
            </div>
          </div>
        </div>
      </div>
      <div className="flex h-[19px] shrink-0 items-center border-t border-[#cdcdcd] pl-1">
        <svg viewBox="0 0 3 12" className="h-3 w-[3px]"><path d="M0 1h2v2H0zM0 5h2v2H0zM0 9h2v2H0z" fill="#bbb" /></svg>
        <button aria-label="Menú de paleta" className="ml-[3px]"><Tri dir="right" /></button>
        <button aria-label="Cuentagotas" className="ml-1"><Dropper /></button>
        <svg viewBox="0 0 6 9" className="mr-[6px] ml-[5px] h-[9px] w-[6px]"><path d="M5 1L1 4.500 5 8" stroke="#c0c0c0" fill="none" strokeWidth="1.500" /></svg>
        <CrossBox />
        <button aria-label="Rojo" className="h-[18px] w-[18px] border border-[#7a2222] bg-[#ff0000]" />
        <svg viewBox="0 0 22 9" className="mr-[13px] ml-auto h-[9px] w-[22px]">
          <path d="M1 1l4 3.500L1 8M14 1l3 3.500L14 8M18 1l3 3.500L18 8" stroke="#b5b5b5" fill="none" strokeWidth="1.500" />
        </svg>
      </div>
    </main>
  );
}

function Dropper({ dim = false }: { dim?: boolean }) {
  return (
    <svg viewBox="0 0 13 13" className="block h-[13px] w-[13px]" aria-hidden="true">
      <path d="M1 12l7-7" stroke={dim ? '#c6c6c6' : '#8396a4'} strokeWidth="2.500" />
      <path d="M6 3l2-1 2-2 3 3-2 2-1 2z" fill={dim ? '#b5b5b5' : '#22222e'} />
    </svg>
  );
}

function CrossBox() {
  return (
    <button aria-label="Sin color" className="h-[18px] w-[18px] shrink-0 border border-[#555] bg-white">
      <svg viewBox="0 0 16 16" className="block h-full w-full"><path d="M1 1l14 14M15 1L1 15" stroke="#222" /></svg>
    </button>
  );
}

function Lock() {
  return <input type="checkbox" aria-label="Bloquear" className="h-[7px] w-[7px] shrink-0 appearance-none border border-[#b0b0b0] bg-white" />;
}

function Row({ children, className = 'h-7' }: { children: React.ReactNode; className?: string }) {
  return (
    <div className={`flex shrink-0 items-center pr-[6px] pl-[2px] ${className}`}>
      {children}
      <span className="ml-auto flex"><Lock /></span>
    </div>
  );
}

function SectionTitle({ children }: { children: string }) {
  return (
    <Row className="h-[22px]">
      <button aria-label={`Contraer ${children}`} className="mr-[5px] flex"><Glyph name="chevUp" size="h-4 w-4" /></button>
      <h2 className="font-bold">{children}</h2>
    </Row>
  );
}

function Choice({ names, active, className = '' }: { names: GlyphName[]; active: number; className?: string }) {
  return (
    <div className={`flex gap-[6px] ${className}`}>
      {names.map((n, i) => (
        <button key={n} aria-label={n} className={`flex h-[23px] w-6 items-center justify-center ${i === active ? 'border border-[#a8a8a8] bg-white' : ''}`}>
          <Glyph name={n} size="h-4 w-4" />
        </button>
      ))}
    </div>
  );
}

function FillStrip({ dark = false }: { dark?: boolean }) {
  const names = ['noFill', 'solid', 'gradient', 'pattern', 'texture', 'twoTone'];
  return (
    <div className={`ml-[2px] flex gap-[5px] ${dark ? 'text-[#25253a]' : 'text-[#686b99]'}`}>
      {names.map((n, i) => (
        <button key={n} aria-label={n} className={`relative flex h-[23px] w-[23px] items-center justify-center ${i === 0 ? 'border border-[#a8a8a8] bg-white' : ''}`}>
          {n === 'gradient' ? (
            <span className={`h-4 w-4 border border-[#8a8aa0] bg-linear-to-br ${dark ? 'from-white to-[#444]' : 'from-[#f5f5fb] to-[#6c6f9c]'}`} />
          ) : (
            <Glyph name={n} />
          )}
          {dark && i > 0 && (
            <svg viewBox="0 0 9 9" className="absolute top-[2px] right-[2px] h-[9px] w-[9px]">
              <path d="M.5.5h8v8h-8z" fill="#fff" stroke="#8a8a94" /><path d="M1 1h4v4H1zM5 5h3v3H5z" fill="#b8b8c0" />
            </svg>
          )}
          {i === 5 && <svg viewBox="0 0 5 5" className="absolute -right-px bottom-px h-[5px] w-[5px]"><path d="M5 0v5H0z" fill="#000" /></svg>}
        </button>
      ))}
    </div>
  );
}

const Rule = ({ className = '' }: { className?: string }) => <div className={`mr-[5px] ml-1 h-px shrink-0 bg-[#cfcfcf] ${className}`} />;
const HeavyRule = ({ className = '' }: { className?: string }) => <div className={`h-[2px] shrink-0 bg-[#a3a3a3] ${className}`} />;

function PropertiesPanel() {
  return (
    <section className="flex w-[260px] shrink-0 flex-col border-r border-[#2f9fce]">
      <div className="flex h-[25px] shrink-0 items-center pr-px">
        <button aria-label="Contorno" className="ml-1 flex w-4 justify-center"><Glyph name="nib" size="h-4 w-4" /></button>
        <button aria-label="Relleno" className="ml-3 flex w-4 justify-center"><Glyph name="bucket" size="h-4 w-4" /></button>
        <button aria-label="Transparencia" className="ml-3 flex w-4 justify-center"><Glyph name="glass" size="h-4 w-4" /></button>
        <button aria-label="Modo de desplazamiento" className="ml-auto flex h-[23px] w-[23px] items-center justify-center border border-[#a8a8a8] bg-white"><Glyph name="tabsMode" /></button>
        <Sep className="mx-[3px]" />
        <button aria-label="Vista previa" className="flex h-[23px] w-[23px] items-center justify-center border border-[#a8a8a8] bg-white"><Glyph name="preview" /></button>
      </div>
      <HeavyRule />
      <SectionTitle>Contorno</SectionTitle>
      <Row className="mt-[2px] h-7">
        <Glyph name="penWidth" />
        <div className="ml-[3px] flex h-[23px] w-[127px] items-center border border-[#d6d6d6] bg-white pr-[3px] pl-1">
          <input aria-label="Anchura de contorno" defaultValue="0.2 mm" className="h-4 w-[42px] bg-[#3390ff] px-px text-white outline-none" />
          <span className="ml-auto"><Tri /></span>
        </div>
        <Picker label="Unidades de contorno" value="milímetros" className="ml-[5px] w-[84px]" />
      </Row>
      <Row>
        <Glyph name="penColor" />
        <button aria-label="Color de contorno" className="ml-[3px] flex h-[23px] w-[127px] border border-[#a8a8a8] bg-white">
          <span className="m-[2px] h-[17px] flex-1 bg-black" />
          <span className="flex h-full w-[17px] items-center justify-center border border-[#777] bg-[#ededed]"><Tri /></span>
        </button>
      </Row>
      <Row>
        <Glyph name="penStyle" />
        <button aria-label="Estilo de línea" className="ml-[3px] flex h-[23px] w-[127px] items-center border border-[#a8a8a8] bg-white">
          <span className="mx-[2px] h-px flex-1 bg-black" />
          <span className="flex h-full w-[17px] items-center justify-center border border-[#777] bg-[#ededed]"><Tri /></span>
        </button>
        <button aria-label="Configuración" className="ml-[11px] flex gap-[2px] pt-2">
          <span className="h-[2px] w-[2px] bg-[#444]" /><span className="h-[2px] w-[2px] bg-[#444]" /><span className="h-[2px] w-[2px] bg-[#444]" />
        </button>
      </Row>
      <Rule className="mt-1" />
      <Row className="mt-[3px] h-7">
        <Glyph name="miter" />
        <SpinField label="Límite de inglete" value="5.0" className="ml-[3px] w-[111px]" />
        <span className="ml-[7px] flex"><Lock /></span>
        <Choice names={['corner1', 'corner2', 'corner3']} active={0} className="ml-[7px]" />
      </Row>
      <Row><Choice names={['cap1', 'cap2', 'cap3']} active={0} className="ml-[153px]" /></Row>
      <Row><Choice names={['pos1', 'pos2', 'pos3']} active={1} className="ml-[153px]" /></Row>
      <button aria-label="Más opciones" className="mt-[5px] flex h-[14px] shrink-0 items-center justify-center bg-[#e8e8e8]"><Tri /></button>
      <HeavyRule className="mt-[7px]" />
      <SectionTitle>Rellenar</SectionTitle>
      <Row className="mb-[2px] h-8"><FillStrip /></Row>
      <Rule />
      <p className="py-[9px] pl-1 leading-4 whitespace-nowrap">El valor predeterminado no contiene relleno.</p>
      <HeavyRule />
      <SectionTitle>Transparencia</SectionTitle>
      <Row className="mb-[2px] h-8"><Picker label="Tipo de mezcla" value="Normal" className="ml-[2px] w-[235px]" /></Row>
      <Rule />
      <Row className="mt-px mb-[2px] h-8"><FillStrip dark /></Row>
      <Rule />
    </section>
  );
}

function Docker() {
  return (
    <div className="ml-[3px] flex w-[282px] shrink-0 flex-col border-l-2 border-white shadow-[-1px_0_0_#cdcdcd]">
      <div className="flex h-5 shrink-0 items-center border-b border-[#b0b0b0] bg-[#e7e7e7] pr-[5px] pl-[2px]">
        <span className="leading-4">Propiedades de objeto</span>
        <button aria-label="Contraer panel" className="ml-auto"><svg viewBox="0 0 10 8" className="h-2 w-[10px]"><path d="M0 0l5 4-5 4zM5 0l5 4-5 4z" fill="#b5b5b5" /></svg></button>
        <button aria-label="Cerrar panel" className="ml-2"><svg viewBox="0 0 10 10" className="h-[10px] w-[10px]"><path d="M1 1l8 8M9 1L1 9" stroke="#a9a9a9" strokeWidth="1.500" /></svg></button>
      </div>
      <div className="flex min-h-0 flex-1">
        <PropertiesPanel />
        <div className="flex flex-1 flex-col items-center bg-[#e9e9e9]">
          <button className="flex h-[149px] w-full shrink-0 flex-col items-center gap-1 bg-[#cce0ff] pt-[3px]">
            <Glyph name="docTab" size="h-4 w-4" />
            <span className="[writing-mode:vertical-rl]">Propiedades de ob...</span>
          </button>
          <button aria-label="Agregar ventana acoplable" className="mt-[18px]"><Glyph name="plusRing" size="h-4 w-4" /></button>
        </div>
      </div>
    </div>
  );
}

const swatches = [
  '#000000', '#1a1a1a', '#333333', '#4d4d4d', '#666666', '#808080', '#999999', '#b3b3b3', '#cccccc', '#e6e6e6',
  '#ffffff', '#0000ff', '#00ffff', '#00ff00', '#ffff00', '#ff0000', '#ff00ff', '#9900cc', '#ff6600', '#ff99cc',
  '#663333', '#ccccff', '#9999ff', '#6699ff', '#6666ff', '#6666cc', '#003399', '#000066',
];

function Palette() {
  return (
    <aside className="flex w-[19px] shrink-0 flex-col items-center border-l border-[#cdcdcd]">
      <svg viewBox="0 0 11 2" className="mt-1 h-[2px] w-[11px] shrink-0"><path d="M0 0h2v2H0zM4 0h2v2H4zM8 0h2v2H8z" fill="#bbb" /></svg>
      <button aria-label="Menú de paleta" className="mt-1 flex shrink-0"><Tri dir="right" /></button>
      <span className="mt-[6px] shrink-0"><Dropper dim /></span>
      <svg viewBox="0 0 8 5" className="mt-[6px] mb-[5px] h-[5px] w-2 shrink-0"><path d="M0 4l4-3 4 3" stroke="#c6c6c6" fill="none" strokeWidth="1.500" /></svg>
      <CrossBox />
      <div className="flex min-h-0 w-full flex-1 flex-col overflow-hidden">
        {swatches.map((c) => (
          <button key={c} aria-label={c} className="h-[17px] w-full shrink-0 border-b border-l border-[#555]" style={{ backgroundColor: c }} />
        ))}
      </div>
      <div className="flex h-[39px] shrink-0 flex-col items-center">
        <svg viewBox="0 0 8 5" className="mt-[6px] h-[5px] w-2"><path d="M0 1l4 3 4-3" stroke="#999" fill="none" strokeWidth="1.500" /></svg>
        <svg viewBox="0 0 8 8" className="mt-[9px] h-2 w-2"><path d="M0 1l3 3-3 3M4 1l3 3-3 3" stroke="#aaa" fill="none" strokeWidth="1.500" /></svg>
      </div>
    </aside>
  );
}

function StatusBar() {
  return (
    <footer className="flex h-[34px] shrink-0 items-center border-t border-[#cdcdcd] pl-[5px]">
      <span>( 333.860, 494.521 )</span>
      <button aria-label="Detalles" className="ml-2 flex h-[14px] w-[14px] items-center justify-center border border-black bg-white"><Tri dir="right" /></button>
      <div className="ml-auto flex w-[233px] items-center">
        <Glyph name="proof" size="h-4 w-4" />
        <span className="w-3" />
        <Glyph name="bucket" size="h-4 w-4" />
        <span className="w-[6px]" />
        <CrossBox />
        <span className="ml-[3px]">Ninguna</span>
      </div>
      <Sep className="mr-0" />
      <div className="flex w-[220px] items-center gap-1 pl-1">
        <Glyph name="nib" size="h-4 w-4" />
        <span className="ml-[2px] h-[17px] w-[17px] border border-[#555] bg-black" />
        <span>R:0 G:0 B:0 (#000000)</span>
      </div>
    </footer>
  );
}

function TaskButton({ label, children, className = '' }: { label: string; children: React.ReactNode; className?: string }) {
  return (
    <button aria-label={label} className={`flex h-[38px] shrink-0 items-center justify-center ${className}`}>
      <svg viewBox="0 0 32 32" className="h-8 w-8">{children}</svg>
    </button>
  );
}

const OPEN = 'w-[58px] mr-1 rounded-[3px] border border-[#c5c5cd] bg-linear-to-br from-[#b8b8c0] via-[#85858f] to-[#6c6e80]';

function Taskbar() {
  return (
    <footer className="flex h-10 shrink-0 items-center border-t border-[#1b1b20] bg-linear-to-r from-[#15151a] via-[#5e6073] via-25% to-[#45475a] text-white">
      <button aria-label="Inicio" className="ml-2 shrink-0">
        <svg viewBox="0 0 38 38" className="block h-[38px] w-[38px]">
          <defs>
            <radialGradient id="orb" cx=".5" cy=".95" r=".9"><stop offset="0" stopColor="#4fd8f5" /><stop offset=".45" stopColor="#1a6298" /><stop offset="1" stopColor="#9cb9c8" /></radialGradient>
          </defs>
          <circle cx="19" cy="19" r="18" fill="url(#orb)" stroke="#6e8c9c" />
          <path d="M11 11c3-2 5-1 7 0l-2 8c-2-1-4-2-7 0z" fill="#e8582a" />
          <path d="M20 12c3 1 5 1 8-1l-2 8c-3 2-5 1-8 0z" fill="#8cc63e" />
          <path d="M9 21c3-2 5-1 7 0l-2 7c-2-1-4-2-7 0z" fill="#4b9fe0" />
          <path d="M17 21c3 1 5 2 8 0l-2 7c-3 2-5 1-8 0z" fill="#fcc72b" />
        </svg>
      </button>
      <TaskButton label="Internet Explorer" className="ml-[14px] w-[60px]">
        <path d="M16 4c7 0 12 5 12 13v2H11c0 6 9 7 11 3h5c-2 5-6 8-11 8-7 0-12-5-12-13S9 4 16 4zm-5 10h11c-1-6-10-6-11 0z" fill="#39b3ea" />
        <path d="M4 29C-1 24 8 10 20 4c7-4 10-1 8 4 0-3-3-4-8-1C10 13 3 24 6 28c2 2 6 0 9-2-4 4-9 5-11 3z" fill="#f4c52b" />
      </TaskButton>
      <TaskButton label="Reproductor multimedia" className="mr-1 w-[60px]">
        <path d="M14 6h16v21H14z" fill="#6ba3cf" /><path d="M12 5h15v22H12z" fill="#a5cbe6" /><path d="M4 5h20v23H4z" fill="#7db1d8" stroke="#cfe4f3" />
        <circle cx="14" cy="17" r="9" fill="#ef7a1c" /><path d="M11 11l9 6-9 6z" fill="#fff" />
      </TaskButton>
      <TaskButton label="Chrome" className={OPEN}>
        <circle cx="16" cy="16" r="14" fill="#f6c933" />
        <path d="M3.800 9A14 14 0 0 0 14 30l6-11-7-2z" fill="#1e9e58" />
        <path d="M15 9.500h13.500A14 14 0 0 0 4 9l5 8z" fill="#db4437" />
        <circle cx="16" cy="16" r="6.500" fill="#fff" /><circle cx="16" cy="16" r="5" fill="#4285f4" />
      </TaskButton>
      <TaskButton label="Explorador" className="w-[54px] rounded-[3px] border border-[#fff3b8] bg-linear-to-b from-[#f4dc6a] to-[#e8902e]">
        <path d="M2 4h12l1 3h14v22H2z" fill="#f3d57a" stroke="#b9913c" /><path d="M4 6h7v4H4z" fill="#3fae4c" /><path d="M12 9h8v3h-8z" fill="#e0533b" /><path d="M21 9h7v3h-7z" fill="#4a90d0" />
        <path d="M2 11h28v17H2z" fill="#fbe8a3" /><path d="M6 31V22c0-2 1-3 3-3h15c2 0 3 1 3 3v9h-4v-6H10v6z" fill="#8fd0ec" stroke="#4a9bc6" />
      </TaskButton>
      <span className="mr-1 h-[38px] w-1 shrink-0 rounded-r-[3px] border border-l-0 border-[#b5b5bd]" />
      <TaskButton label="WinRAR" className="w-[58px]">
        <path d="M0 6l5-3h24l2 6-3 2H2z" fill="#8b2d86" /><path d="M0 14l3-2h28v7H2z" fill="#2b3fb8" /><path d="M0 21l3-2h28v8H5z" fill="#2e8b34" />
        <path d="M2 8h9v3H2zM2 15h9v3H2zM3 22h8v4H5z" fill="#e9e2d2" /><path d="M18 3h5v24h-5z" fill="#a8742a" /><path d="M16 11h9v6h-9z" fill="#e0bd55" stroke="#5c4012" />
      </TaskButton>
      <TaskButton label="Firefox" className="mr-1 ml-1 w-[58px]">
        <circle cx="16" cy="16" r="14" fill="#1f74c4" /><path d="M12 3c8 0 10 8 6 12L8 9z" fill="#4fb4ea" />
        <path d="M3 9c1 0 1-3 2-4 1 3 4 3 7 4 3 0 4 2 1 3-2 1-1 2 1 3-3 3-4 0-6-1 0 5 7 8 12 4 6-5 5-11 1-15 8 4 11 11 8 18-3 8-12 11-19 8C2 25 0 17 3 9z" fill="#ea6a15" />
        <path d="M24 6c6 5 7 14 2 20 2-6 1-12-2-20z" fill="#fbc52e" />
      </TaskButton>
      <TaskButton label="Paint" className={OPEN}>
        <path d="M15 8c9-3 15 2 14 10s-10 13-17 11c-4-1-2-5-5-5-6 0-6-5-3-9 3-5 7-6 11-7z" fill="#c4dff0" stroke="#7da7c5" />
        <circle cx="8" cy="17" r="2.500" fill="#e0453b" /><circle cx="13" cy="13" r="2.500" fill="#4ab046" /><circle cx="19" cy="11" r="2.500" fill="#f4b32e" /><circle cx="15" cy="21" r="2.500" fill="#56708a" />
        <path d="M27 4L19 30" stroke="#d78a35" strokeWidth="3" /><path d="M25 1l6 2-4 6-3-2z" fill="#b17a43" />
      </TaskButton>
      <TaskButton label="AutoCAD" className="w-[54px] rounded-[3px] border border-[#c5c5cd] bg-linear-to-br from-[#b8b8c0] via-[#85858f] to-[#6c6e80]">
        <path d="M0 0h32v32H0z" fill="#e8686a" /><path d="M0 0h32v11c-10 1-20 3-32 7z" fill="#f5d5d0" />
        <path d="M14 4h4l9 21-6 2-2-4h-6l-2 4-6-2z" fill="#9e1016" /><path d="M14 4h3l-8 16-4 5z" fill="#d3242a" /><path d="M16 11l3 8h-6z" fill="#e8686a" />
      </TaskButton>
      <span className="mr-1 h-[38px] w-1 shrink-0 rounded-r-[3px] border border-l-0 border-[#b5b5bd]" />
      <TaskButton label="Rhinoceros" className={OPEN}>
        <path d="M0 0h32v32H0z" fill="#17171b" /><path d="M1 2l6 7c4-1 9 3 12 8 2 2 5 1 11-6 0 8-7 14-12 16l-2 3-4-2 1-5c-4 1-8-2-9-6l-2-4 2-2z" fill="#e8e8ea" />
        <path d="M9 15l5 5M19 18l-1 6" stroke="#55555c" fill="none" /><circle cx="6" cy="17" r="2" fill="#b02020" /><path d="M9 1h22v8l-9 7-6-3-7-7z" fill="#303036" />
      </TaskButton>
      <TaskButton label="JC" className={OPEN}>
        <rect width="32" height="32" rx="5" fill="#41608f" /><path d="M0 0h6l6 17z" fill="#e02a3c" />
        <text x="5" y="25" fontSize="20" fontWeight="700" fontStyle="italic" fill="#fff" fontFamily="Liberation Sans, sans-serif">J</text>
        <text x="16" y="25" fontSize="18" fill="#fff" fontFamily="Liberation Sans, sans-serif">C</text>
      </TaskButton>
      <TaskButton label="CorelDRAW" className="w-[58px] rounded-[3px] border border-white bg-linear-to-br from-[#e6e6ea] via-[#bdbdc6] to-[#9a9ba8]">
        <path d="M0 0h32v32H0z" fill="#58a83e" /><path d="M0 5c7 1 18 13 20 24L0 14z" fill="#fff" /><path d="M2 8l15 18" stroke="#58a83e" strokeWidth="1.500" />
        <path d="M12 0l9 18h4L32 0h-4l-4 17h-1L18 0z" fill="#a9d69a" /><path d="M23 0h3l-2 17z" fill="#d5ecce" /><path d="M21 20h5v3h-5z" fill="#a9d69a" />
      </TaskButton>

      <div className="ml-auto flex h-full shrink-0 items-center">
        <span className="mr-4">ES</span>
        <svg viewBox="0 0 164 20" className="h-5 w-[164px]" aria-hidden="true">
          <circle cx="9" cy="11" r="7.500" fill="#00878f" /><circle cx="6" cy="11" r="2.500" fill="none" stroke="#05565c" /><circle cx="12" cy="11" r="2.500" fill="none" stroke="#05565c" />
          <path d="M27 3h6v5h-6zM26 8h8v6h-3v4h-2v-4h-3z" fill="#b0b0b4" /><circle cx="36" cy="14" r="5" fill="#2fa83a" /><path d="M33 14l2 2 4-4" stroke="#fff" fill="none" strokeWidth="1.500" />
          <path d="M50 3c4 1 8 1 13 0v8c0 4-3 6-7 7-4-1-6-3-6-7z" fill="#d02027" stroke="#eee" /><path d="M60 7h-5l-2 2v3l2 2h4v-3h-3" stroke="#fff" fill="none" /><path d="M61 12l5 7H57z" fill="#d02027" stroke="#fff" />
          <path d="M75.500 4v14" stroke="#fff" strokeWidth="1.500" /><path d="M77 5h6v2h6l-2 3 1 3h-6v-2h-5z" fill="#fff" />
          <path d="M99.500 5.500h7v12h-7z" fill="#777" stroke="#fff" strokeWidth="1.500" /><path d="M101 3h4v2h-4z" fill="#fff" /><path d="M104 8h8v4l-2 2v4h-3v-4l-3-2zM106 5v3M110 5v3" fill="#fff" stroke="#55576a" />
          <path d="M122 15h2v2h-2zM125 13h2v4h-2zM128 11h2v6h-2zM131 8h2v9h-2zM134 5h2v12h-2z" fill="#fff" />
          <path d="M149 8h3l4-4v13l-4-4h-3z" fill="#fff" /><path d="M158 8c2 2 2 4 0 6" stroke="#fff" fill="none" />
        </svg>
        <div className="ml-3 w-[62px] text-center leading-[17px]">
          <div>02:58 p.m.</div>
          <div>28/06/2017</div>
        </div>
        <button aria-label="Mostrar escritorio" className="ml-3 h-[38px] w-[13px] border border-[#8c8d9a] bg-linear-to-b from-[#8a8b99] to-[#4a4b5c]" />
      </div>
    </footer>
  );
}

export default function App() {
  return (
    <div className="flex h-screen flex-col overflow-hidden bg-[#f3f3f3] font-['Open_Sans','Noto_Sans',sans-serif] text-[11px] text-black">
      <TitleBar />
      <MenuBar />
      <StandardBar />
      <PropertyBar />
      <div className="flex min-h-0 flex-1">
        <Toolbox />
        <Workspace />
        <Docker />
        <Palette />
      </div>
      <StatusBar />
      <Taskbar />

      {/* Caps Lock notice */}
      <div role="status" className="fixed right-6 bottom-[86px] flex h-[69px] w-[74px] items-center justify-center rounded-md bg-black">
        <svg viewBox="0 0 42 42" className="h-[42px] w-[42px]">
          <path d="M14 27H4L21 5l17 22H28M9 28v4H5v7h32v-7h-4v-4" fill="none" stroke="#fff" strokeWidth="3" />
          <text x="21" y="33" textAnchor="middle" fontSize="22" fontWeight="700" fill="#fff" fontFamily="Liberation Sans, sans-serif">A</text>
        </svg>
      </div>
    </div>
  );
}
